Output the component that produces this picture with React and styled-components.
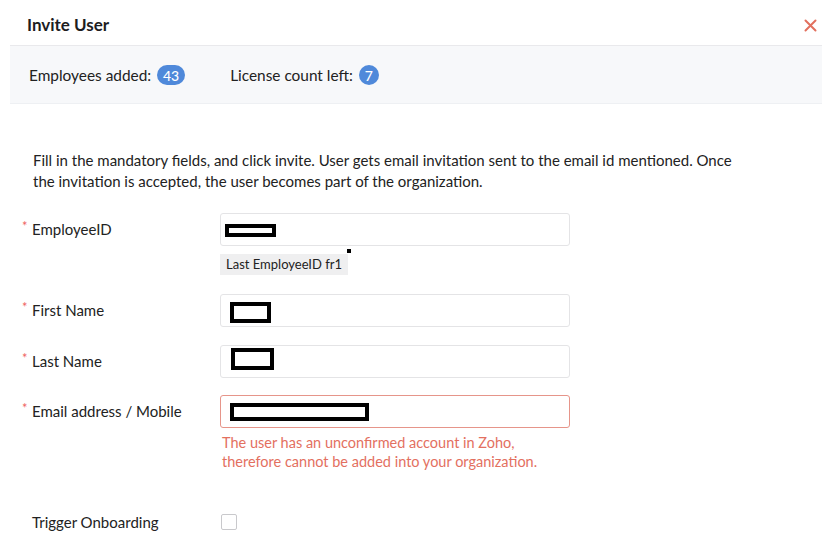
import React from "react";
import styled, { createGlobalStyle } from "styled-components";

const Global = createGlobalStyle`
  html, body { margin: 0; padding: 0; background: #fff; }
  body { font-family: Lato, "Noto Sans", "Liberation Sans", sans-serif; color: #222; }
`;

const Modal = styled.div`
  width: 812px;
  margin-left: 10px;
  height: 558px;
  background: #fff;
`;

const Header = styled.div`
  height: 46px;
  display: flex;
  align-items: center;
  justify-content: space-between;
  padding: 0 5px 0 17px;
  border-bottom: 1px solid #e9e9ec;
  box-sizing: border-box;
`;

const Title = styled.h1`
  margin: 0;
  font-size: 17px;
  font-weight: 700;
  color: #1d1d1f;
  padding-top: 4px;
`;

const Close = styled.button`
  border: 0;
  background: none;
  padding: 0;
  width: 14px;
  height: 14px;
  display: flex;
  align-items: center;
  justify-content: center;
  margin-top: 5px;
`;

const Summary = styled.div`
  height: 58px;
  background: #f7f8fa;
  display: flex;
  align-items: center;
  padding: 1px 0 0 19px;
  gap: 45px;
  border-bottom: 1px solid #eef0f3;
  box-sizing: border-box;
`;

const Stat = styled.div`
  display: flex;
  align-items: center;
  gap: 6px;
  font-size: 15.4px;
  color: #222;
`;

const Badge = styled.span`
  display: inline-flex;
  align-items: center;
  justify-content: center;
  height: 20px;
  min-width: ${(p) => (p.$wide ? "28px" : "20px")};
  padding: 0 ${(p) => (p.$wide ? "4px" : "0")};
  box-sizing: border-box;
  border-radius: 10px;
  background: #4f89da;
  color: #fff;
  font-size: 14px;
  font-weight: 500;
`;

const Body = styled.div`
  padding: 46px 0 0 12px;
`;

const Description = styled.p`
  margin: 0 0 21px 11px;
  width: 740px;
  font-size: 15px;
  line-height: 21px;
  color: #222;
`;

const Row = styled.div`
  display: flex;
  align-items: flex-start;
  margin-bottom: ${(p) => p.$mb || 18}px;
`;

const Label = styled.label`
  width: 198px;
  flex: none;
  font-size: 15px;
  line-height: 33px;
  color: #222;
  display: flex;
  align-items: flex-start;
`;

const Star = styled.span`
  color: #ef6464;
  font-size: 13px;
  line-height: 20px;
  width: 10px;
  margin-top: 3px;
`;

const LabelText = styled.span`
  padding-left: ${(p) => (p.$plain ? "10px" : "0")};
`;

const FieldCol = styled.div`
  display: flex;
  flex-direction: column;
  align-items: flex-start;
`;

const Input = styled.div`
  position: relative;
  width: 350px;
  height: 33px;
  box-sizing: border-box;
  border: 1px solid ${(p) => (p.$error ? "#e6958a" : "#e4e4e6")};
  border-radius: 3px;
  background: #fff;
`;

const Redact = styled.span`
  position: absolute;
  box-sizing: border-box;
  border: 4px solid #000;
  background: #fff;
`;

const HintWrap = styled.div`
  position: relative;
  margin-top: 7px;
`;

const Hint = styled.span`
  display: inline-block;
  background: #efeff0;
  font-size: 13px;
  line-height: 21px;
  padding: 0 6px;
  color: #222;
`;

const Speck = styled.span`
  position: absolute;
  right: -3px;
  top: -4px;
  width: 4px;
  height: 4px;
  background: #000;
`;

const ErrorText = styled.div`
  margin-top: 5px;
  margin-left: 2px;
  font-size: 14.5px;
  line-height: 19px;
  color: #e3705f;
`;

const Checkbox = styled.span`
  display: block;
  width: 16px;
  height: 16px;
  box-sizing: border-box;
  border: 1px solid #c9c9cc;
  border-radius: 2px;
  margin: 8px 0 0 1px;
  background: #fff;
`;

const fields = [
  { label: "First Name", r: { l: 9, t: 7, w: 41, h: 21 }, mb: 18 },
  { label: "Last Name", r: { l: 10, t: 2, w: 43, h: 22 }, mb: 17 },
];

export default function App() {
  return (
    <>
      <Global />
      <Modal>
        <Header>
          <Title>Invite User</Title>
          <Close aria-label="close">
            <svg width="13" height="13" viewBox="0 0 13 13">
              <path d="M1.5 1.5 L11.5 11.5 M11.5 1.5 L1.5 11.5" stroke="#e2705e" strokeWidth="2" strokeLinecap="round" />
            </svg>
          </Close>
        </Header>
        <Summary>
          <Stat>
            Employees added: <Badge $wide>43</Badge>
          </Stat>
          <Stat>
            License count left: <Badge>7</Badge>
          </Stat>
        </Summary>
        <Body>
          <Description>
            Fill in the mandatory fields, and click invite. User gets email invitation sent to the email id mentioned. Once
            <br />
            the invitation is accepted, the user becomes part of the organization.
          </Description>
          <Row $mb={19}>
            <Label>
              <Star>*</Star>
              <LabelText>EmployeeID</LabelText>
            </Label>
            <FieldCol>
              <Input>
                <Redact style={{ left: 4, top: 10, width: 51, height: 13 }} />
              </Input>
              <HintWrap>
                <Hint>Last EmployeeID fr1</Hint>
                <Speck />
              </HintWrap>
            </FieldCol>
          </Row>
          {fields.map((f) => (
            <Row key={f.label} $mb={f.mb}>
              <Label>
                <Star>*</Star>
                <LabelText>{f.label}</LabelText>
              </Label>
              <FieldCol>
                <Input>
                  <Redact style={{ left: f.r.l, top: f.r.t, width: f.r.w, height: f.r.h }} />
                </Input>
              </FieldCol>
            </Row>
          ))}
          <Row $mb={35}>
            <Label>
              <Star>*</Star>
              <LabelText>Email address / Mobile</LabelText>
            </Label>
            <FieldCol>
              <Input $error>
                <Redact style={{ left: 9, top: 7, width: 139, height: 18 }} />
              </Input>
              <ErrorText>
                The user has an unconfirmed account in Zoho,
                <br />
                therefore cannot be added into your organization.
              </ErrorText>
            </FieldCol>
          </Row>
          <Row>
            <Label>
              <LabelText $plain>Trigger Onboarding</LabelText>
            </Label>
            <Checkbox />
          </Row>
        </Body>
      </Modal>
    </>
  );
}
